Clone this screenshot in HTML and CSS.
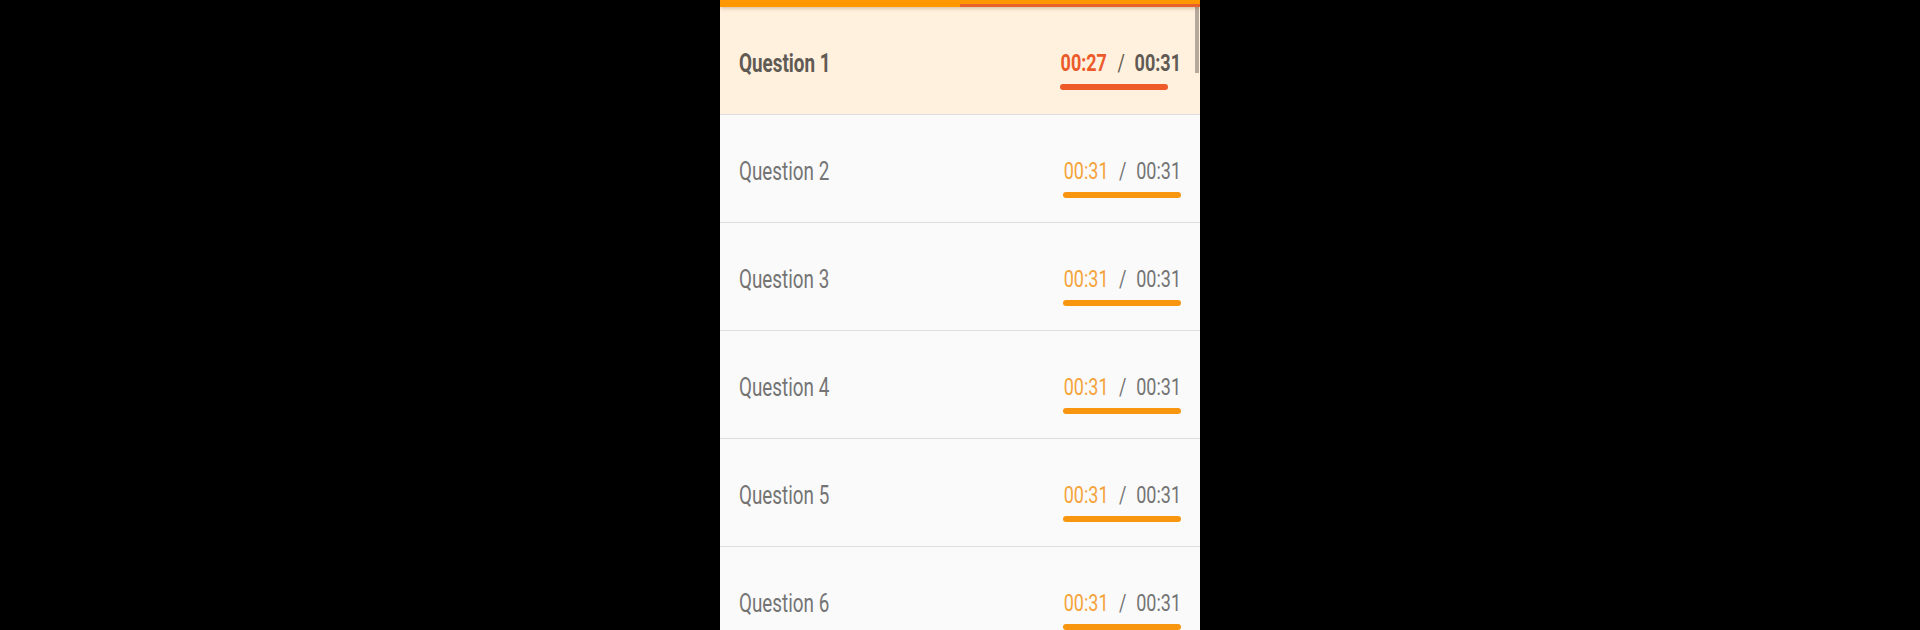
FILE: index.html
```html
<!DOCTYPE html>
<html lang="en">
  <head>
    <meta charset="UTF-8" />
    <meta name="viewport" content="width=device-width, initial-scale=1.0" />
    <title>Timer</title>
    <link rel="stylesheet" href="styles.css">
  </head>
  <body>
    <div id="phone">
      <div class="header">
        <div class="progress">
          <div class="progress-done"></div>
          <div class="progress-left"></div>
        </div>
      </div>
      <div id="list">
        <div class="scrollbar"></div>
        <div class="row active">
          <span class="name">Question 1</span>
          <div class="timer">
            <span class="time"><span class="now">00:27</span><span class="sep">/</span><span class="total">00:31</span></span>
            <div class="bar" style="width: 108px"></div>
          </div>
        </div>
        <div class="row">
          <span class="name">Question 2</span>
          <div class="timer">
            <span class="time"><span class="now">00:31</span><span class="sep">/</span><span class="total">00:31</span></span>
            <div class="bar"></div>
          </div>
        </div>
        <div class="row">
          <span class="name">Question 3</span>
          <div class="timer">
            <span class="time"><span class="now">00:31</span><span class="sep">/</span><span class="total">00:31</span></span>
            <div class="bar"></div>
          </div>
        </div>
        <div class="row">
          <span class="name">Question 4</span>
          <div class="timer">
            <span class="time"><span class="now">00:31</span><span class="sep">/</span><span class="total">00:31</span></span>
            <div class="bar"></div>
          </div>
        </div>
        <div class="row">
          <span class="name">Question 5</span>
          <div class="timer">
            <span class="time"><span class="now">00:31</span><span class="sep">/</span><span class="total">00:31</span></span>
            <div class="bar"></div>
          </div>
        </div>
        <div class="row">
          <span class="name">Question 6</span>
          <div class="timer">
            <span class="time"><span class="now">00:31</span><span class="sep">/</span><span class="total">00:31</span></span>
            <div class="bar"></div>
          </div>
        </div>
      </div>
    </div>
  </body>
</html>
```

FILE: styles.css
```css
html,
body {
  background-color: #000;
  padding: 0;
  margin: 0;
  height: 100%;
  overflow: hidden;
  font-family: Roboto, 'Liberation Sans', sans-serif;
}

#phone {
  width: 480px;
  height: 630px;
  margin: 0 auto;
  background-color: #fafafa;
  display: flex;
  flex-direction: column;
  overflow: hidden;
}

.header {
  position: relative;
  z-index: 2;
  background-color: #ff9800;
  padding-top: 4px;
  box-shadow: 0 1px 4px rgba(120, 70, 0, 0.35);
}

.progress {
  display: flex;
  height: 3px;
}

.progress-done {
  width: 50%;
  background-color: #ff9800;
}

.progress-left {
  flex: 1;
  background-color: #e8602a;
}

#list {
  position: relative;
}

.scrollbar {
  position: absolute;
  top: 0;
  right: 1px;
  width: 4px;
  height: 66px;
  background-color: rgba(120, 110, 100, 0.55);
  z-index: 1;
}

.row {
  box-sizing: border-box;
  height: 108px;
  padding: 0 19px 0 19px;
  display: flex;
  align-items: center;
  justify-content: space-between;
  border-bottom: 1px solid #dedede;
  color: #747474;
}

.row.active {
  background-color: #fff1de;
  color: #5f5a53;
  font-weight: bold;
}

.name {
  display: inline-block;
  font-size: 26px;
  line-height: 30px;
  padding-top: 4px;
  transform: scaleX(0.725);
  transform-origin: left center;
  white-space: nowrap;
}

.timer {
  width: 118px;
  display: flex;
  flex-direction: column;
  align-items: flex-start;
  padding-top: 18px;
}

.time {
  display: block;
  width: 170px;
  margin-left: -52px;
  text-align: right;
  font-size: 24px;
  line-height: 28px;
  white-space: nowrap;
  transform: scaleX(0.75);
  transform-origin: right center;
}

.now {
  color: #f4a43a;
}

.active .now {
  color: #ec5a2a;
}

.sep {
  font-weight: normal;
  margin: 0 13px 0 14px;
}

.bar {
  width: 118px;
  height: 6px;
  margin-top: 7px;
  border-radius: 3px;
  background-color: #f8960f;
}

.active .bar {
  margin-left: -3px;
  background-color: #ee5a28;
}
```
